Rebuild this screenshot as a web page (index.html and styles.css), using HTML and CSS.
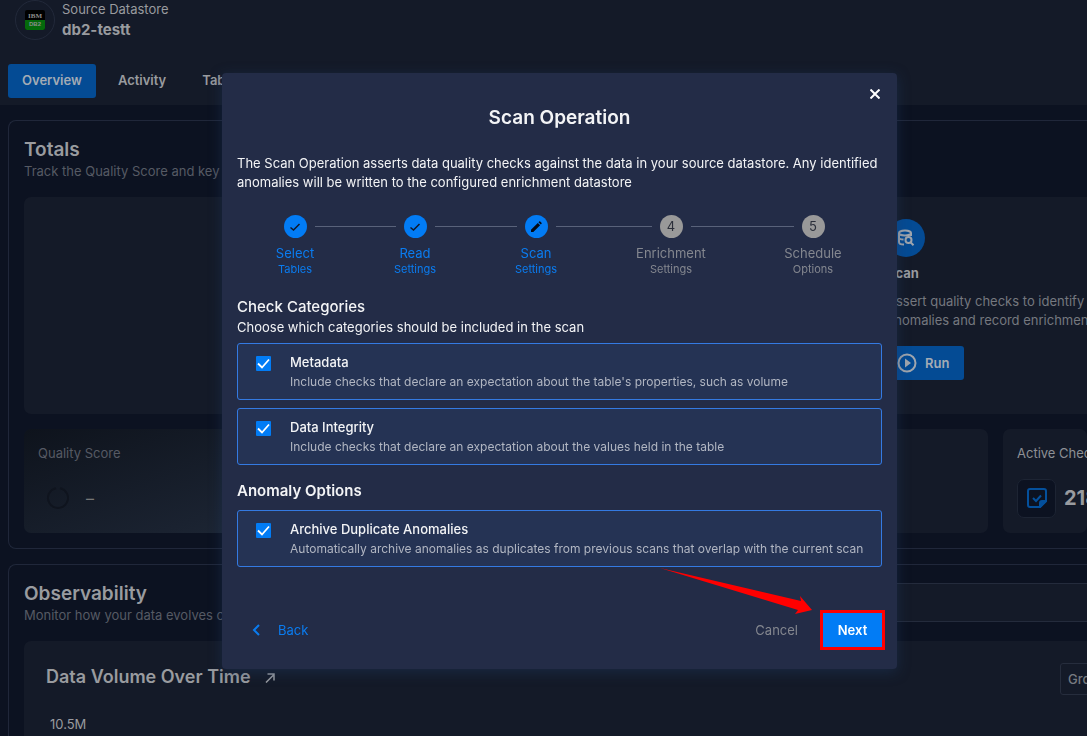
FILE: index.html
```html
<!DOCTYPE html>
<html lang="en">
<head>
<meta charset="utf-8">
<title>Scan Operation</title>
<link rel="stylesheet" href="styles.css">
</head>
<body>
<div class="page">
  <header class="header">
    <div class="source">
      <span class="source-logo">
        <svg width="20" height="20" viewBox="0 0 20 20" aria-hidden="true">
          <rect width="20" height="20" rx="2" fill="#000"/>
          <path d="M0 10h20v8a2 2 0 0 1-2 2H2a2 2 0 0 1-2-2z" fill="#046a0b"/>
          <text x="10" y="8" class="logo-ibm">IBM</text>
          <text x="10" y="16" class="logo-db">DB2</text>
        </svg>
      </span>
      <div>
        <p class="source-kind">Source Datastore</p>
        <p class="source-name">db2-testt</p>
      </div>
    </div>
    <nav class="tabs">
      <button class="tab tab-active">Overview</button>
      <button class="tab">Activity</button>
      <button class="tab">Tables</button>
    </nav>
  </header>
  <main class="main">
    <section class="card">
      <h2 class="card-title">Totals</h2>
      <p class="card-sub">Track the Quality Score and key metrics</p>
      <div class="panel operations">
        <article class="operation">
          <span class="operation-icon">
            <svg width="18" height="18" viewBox="0 0 18 18" fill="none" stroke="#a0a6ae" stroke-width="2" aria-hidden="true">
              <ellipse cx="8" cy="4" rx="6" ry="2.5"/>
              <path d="M2 4v9c0 1.500 2 2.500 5 2.500M14 4v3M2 8.500c0 1.200 2 2 4.500 2"/>
              <circle cx="11.500" cy="11" r="3"/>
              <path d="M13.500 13.300l3 3"/>
            </svg>
          </span>
          <h3 class="operation-title">Scan</h3>
          <p class="operation-text">Assert quality checks to identify anomalies and record enrichment</p>
          <button class="run">
            <svg width="20" height="20" viewBox="0 0 20 20" aria-hidden="true">
              <circle cx="10" cy="10" r="8.500" fill="none" stroke="#a0a6ae" stroke-width="2"/>
              <path d="M8 5.500l6 4.500-6 4.500z" fill="#a0a6ae"/>
            </svg>
            Run
          </button>
        </article>
      </div>
      <div class="metrics">
        <div class="panel metric metric-quality">
          <p class="metric-label">Quality Score</p>
          <div class="quality-value">
            <svg width="24" height="24" viewBox="0 0 24 24" aria-hidden="true">
              <path d="M14 2.200a10 10 0 1 1-4 0" fill="none" stroke="#0f141e" stroke-width="2"/>
            </svg>
            <span>–</span>
          </div>
        </div>
        <div class="panel metric"></div>
        <div class="panel metric">
          <p class="metric-label metric-label-light">Active Checks</p>
          <div class="checks-value">
            <span class="checks-icon">
              <svg width="20" height="20" viewBox="0 0 20 20" fill="none" stroke="#04509c" stroke-width="2" aria-hidden="true">
                <path d="M3 1h14a2 2 0 0 1 2 2v10l-6 6H3a2 2 0 0 1-2-2V3a2 2 0 0 1 2-2z"/>
                <path d="M19 13h-4a2 2 0 0 0-2 2v4z" fill="#04509c"/>
                <path d="M6 10l3 3 5-5.500"/>
              </svg>
            </span>
            <strong>218</strong>
          </div>
        </div>
      </div>
    </section>
    <section class="card card-observability">
      <div class="observability-head">
        <div>
          <h2 class="card-title">Observability</h2>
          <p class="card-sub">Monitor how your data evolves over time</p>
        </div>
        <div class="filter-bar"></div>
      </div>
      <div class="panel chart">
        <div class="chart-head">
          <h3 class="chart-title">Data Volume Over Time
            <svg width="10" height="10" viewBox="0 0 10 10" fill="none" stroke="#999ca1" stroke-width="1.500" aria-hidden="true">
              <path d="M1 9.500L9 1.500M2.500 1h6.500v6.500"/>
            </svg>
          </h3>
          <button class="group">Group</button>
        </div>
        <p class="chart-tick">10.5M</p>
      </div>
    </section>
  </main>
</div>

<div class="overlay">
  <form class="modal" role="dialog" aria-labelledby="modal-title">
    <button type="button" class="close" aria-label="Close">
      <svg width="10" height="10" viewBox="0 0 10 10" stroke="#fff" stroke-width="2" aria-hidden="true">
        <path d="M0.500 0.500l9 9M9.500 0.500l-9 9"/>
      </svg>
    </button>
    <h1 class="modal-title" id="modal-title">Scan Operation</h1>
    <p class="modal-text">The Scan Operation asserts data quality checks against the data in your source datastore. Any identified anomalies will be written to the configured enrichment datastore</p>
    <ol class="steps">
      <li class="step step-done">
        <div class="step-track"><span class="step-dot"><svg width="12" height="12" viewBox="0 0 12 12" fill="none" stroke="#10182a" stroke-width="1.500"><path d="M1.500 6.500L4.500 9 10.500 3"/></svg></span></div>
        <span class="step-name">Select</span><span class="step-sub">Tables</span>
      </li>
      <li class="step step-done">
        <div class="step-track"><span class="step-dot"><svg width="12" height="12" viewBox="0 0 12 12" fill="none" stroke="#10182a" stroke-width="1.500"><path d="M1.500 6.500L4.500 9 10.500 3"/></svg></span></div>
        <span class="step-name">Read</span><span class="step-sub">Settings</span>
      </li>
      <li class="step step-done">
        <div class="step-track"><span class="step-dot"><svg width="12" height="12" viewBox="0 0 12 12" fill="#050a14"><path d="M1 8.700L7.800 1.900l2.300 2.300L3.300 11H1zM8.500 1.200l.7-.7q.5-.5 1 0l1.300 1.300q.5.500 0 1l-.7.700z"/></svg></span></div>
        <span class="step-name">Scan</span><span class="step-sub">Settings</span>
      </li>
      <li class="step">
        <div class="step-track"><span class="step-dot">4</span></div>
        <span class="step-name">Enrichment</span><span class="step-sub">Settings</span>
      </li>
      <li class="step">
        <div class="step-track"><span class="step-dot">5</span></div>
        <span class="step-name">Schedule</span><span class="step-sub">Options</span>
      </li>
    </ol>
    <h2 class="group-title">Check Categories</h2>
    <p class="group-text">Choose which categories should be included in the scan</p>
    <label class="option">
      <input type="checkbox" class="check" checked>
      <span class="option-body">
        <span class="option-title">Metadata</span>
        <span class="option-text">Include checks that declare an expectation about the table's properties, such as volume</span>
      </span>
    </label>
    <label class="option">
      <input type="checkbox" class="check" checked>
      <span class="option-body">
        <span class="option-title">Data Integrity</span>
        <span class="option-text">Include checks that declare an expectation about the values held in the table</span>
      </span>
    </label>
    <h2 class="group-title group-title-strong">Anomaly Options</h2>
    <label class="option">
      <input type="checkbox" class="check" checked>
      <span class="option-body">
        <span class="option-title">Archive Duplicate Anomalies</span>
        <span class="option-text">Automatically archive anomalies as duplicates from previous scans that overlap with the current scan</span>
      </span>
    </label>
    <footer class="actions">
      <button type="button" class="back">
        <svg width="8" height="12" viewBox="0 0 8 12" fill="none" stroke="#0a7cf0" stroke-width="2" aria-hidden="true"><path d="M7 1L2 6l5 5"/></svg>
        Back
      </button>
      <button type="button" class="cancel">Cancel</button>
      <button type="submit" class="next">Next</button>
      <svg class="arrow" width="152" height="47" viewBox="0 0 152 47" aria-hidden="true">
        <path d="M0 0L141 33 140 28 152 42 135 46 138 42z" fill="#f00"/>
      </svg>
    </footer>
  </form>
</div>
</body>
</html>
```

FILE: styles.css
```css
* { box-sizing: border-box; }
body, h1, h2, h3, p, ol { margin: 0; padding: 0; }
body {
  background: #0c1221;
  color: #999b9f;
  font-family: Inter, "Liberation Sans", sans-serif;
  font-size: 13px;
  line-height: 19px;
  overflow: hidden;
}
button { border: 0; background: none; color: inherit; font: inherit; padding: 0; }

.page { display: flex; flex-direction: column; height: 100vh; min-width: 900px; }
.header { background: #141a28; padding: 0 0 7px 8px; }
.source { display: flex; gap: 7px; padding-left: 7px; height: 64px; }
.source-logo {
  display: flex; align-items: center; justify-content: center;
  width: 40px; height: 40px; border: 1px solid #22293a; border-radius: 50%;
}
.logo-ibm, .logo-db { font: 700 7px "Liberation Serif", serif; text-anchor: middle; fill: #8d8d8d; }
.logo-db { font: 700 6px "Liberation Sans", sans-serif; }
.source-kind { line-height: 19px; }
.source-name { font-size: 15px; font-weight: 700; line-height: 22px; }
.tabs { display: flex; gap: 8px; }
.tab { height: 34px; padding: 0 14px 2px; border-radius: 3px; font-weight: 600; }
.tab-active { background: #044b94; color: #a3abb5; }

.main { display: flex; flex-direction: column; gap: 15px; flex: 1; min-height: 0; padding: 15px 0 0 8px; }
.card {
  display: flex; flex-direction: column;
  padding: 17px 0 15px 15px;
  border: 1px solid #20273a; border-right: 0; border-radius: 8px 0 0 8px;
}
.card-title { font-size: 19px; font-weight: 600; line-height: 24px; }
.card-sub { color: #565a64; line-height: 19px; }
.panel { background: #141a28; border-radius: 7px; }
.operations {
  display: flex; justify-content: flex-end; overflow: hidden;
  height: 217px; margin: 16px 0 15px; padding-top: 22px; border-radius: 7px 0 0 7px;
}
.operation { display: flex; flex-direction: column; align-items: flex-start; width: 200px; flex: none; }
.operation-icon {
  display: flex; align-items: center; justify-content: center;
  width: 38px; height: 38px; border-radius: 50%; background: #044b94;
}
.operation-title { margin: 7px 0 9px; font-size: 13px; font-weight: 700; line-height: 19px; }
.operation-text { width: 220px; color: #75787f; }
.run {
  display: flex; align-items: center; gap: 8px;
  height: 34px; margin-top: 16px; padding: 0 15px 0 10px;
  border-radius: 3px; background: #044b94; color: #a3abb5; font-weight: 600;
}
.metrics { display: grid; grid-template-columns: 1fr 1fr 84px; gap: 15px; }
.metric { height: 104px; padding: 15px 0 0 14px; overflow: hidden; }
.metric-quality { background: linear-gradient(160deg, #0e131c, #1a2230 55%, #25303f); }
.metric-label { color: #565a64; white-space: nowrap; }
.metric-label-light { color: #8d9095; }
.quality-value { display: flex; align-items: center; gap: 16px; height: 40px; margin-top: 15px; padding-left: 8px; color: #777; font-size: 16px; }
.checks-value { display: flex; align-items: center; gap: 8px; height: 40px; margin-top: 15px; font-size: 20px; }
.checks-icon {
  display: flex; align-items: center; justify-content: center; flex: none;
  width: 39px; height: 39px; border: 1px solid #1d2433; border-radius: 7px; background: #0c1221;
}

.card-observability { flex: 1; min-height: 0; padding-bottom: 0; border-bottom: 0; border-radius: 8px 0 0; }
.observability-head { display: flex; }
.filter-bar { flex: 1; height: 39px; margin: 1px 0 0 48px; border: solid #242b3c; border-width: 1px 0; background: #141a28; }
.chart { flex: 1; margin-top: 16px; padding: 22px 0 0 22px; border-radius: 7px 0 0; overflow: hidden; }
.chart-head { display: flex; justify-content: space-between; align-items: flex-start; }
.chart-title { font-size: 18px; font-weight: 600; line-height: 28px; }
.chart-title svg { margin-left: 10px; }
.group { width: 60px; height: 32px; margin-right: -33px; padding-left: 7px; border: 1px solid #262d3d; border-radius: 3px; color: #777a80; text-align: left; font-weight: 500; }
.chart-tick { margin-top: 20px; padding-left: 4px; }

.overlay {
  position: fixed; inset: 0;
  display: flex; align-items: center; justify-content: center;
  padding: 6px 0 0 32px;
}
.modal {
  position: relative;
  display: flex; flex-direction: column;
  width: 675px; max-width: 100%;
  padding: 31px 15px 22px;
  border-radius: 4px;
  background: #232c47;
  color: #f3f4f6;
  box-shadow: 0 3px 14px rgba(32, 60, 100, 0.45);
}
.close { position: absolute; top: 11px; right: 12px; display: flex; align-items: center; justify-content: center; width: 20px; height: 20px; }
.modal-title { font-size: 19px; font-weight: 600; line-height: 28px; text-align: center; }
.modal-text { margin: 22px 0 23px; }
.steps { display: grid; grid-template-columns: 116fr 124fr 118fr 152fr 132fr; padding-right: 3px; list-style: none; }
.step { display: flex; flex-direction: column; text-align: center; color: #84878f; }
.step-done { color: #0a7cf0; }
.step-track { display: flex; align-items: center; gap: 8px; height: 23px; margin-bottom: 6px; }
.step-track::before, .step-track::after { content: ""; flex: 1; height: 1px; background: #59627a; }
.step:first-child .step-track::before, .step:last-child .step-track::after { visibility: hidden; }
.step-dot {
  display: flex; align-items: center; justify-content: center;
  width: 23px; height: 23px; border-radius: 50%;
  background: #999; color: #2b2f3a;
}
.step-done .step-dot { background: #027cf5; }
.step-name { line-height: 18px; }
.step-sub { font-size: 11px; line-height: 14px; }
.group-title { margin-top: 20px; font-size: 15px; font-weight: 500; line-height: 22px; }
.group-title-strong { margin-top: 15px; margin-bottom: 8px; font-weight: 600; }
.group-text { margin-bottom: 6px; }
.option {
  display: flex; gap: 19px;
  min-height: 57px; padding: 9px 8px 8px 18px;
  border: 1px solid #347ae2; border-radius: 3px;
  background: #253354;
}
.option + .option { margin-top: 8px; }
.check {
  appearance: none;
  width: 15px; height: 15px; margin: 3px 0 0; flex: none;
  border-radius: 1px;
  background: #027cf5 url("data:image/svg+xml,%3Csvg xmlns='http://www.w3.org/2000/svg' viewBox='0 0 15 15'%3E%3Cpath d='M2 7.500l4 4 7-8' fill='none' stroke='white' stroke-width='1.800'/%3E%3C/svg%3E");
}
.option-body { display: flex; flex-direction: column; }
.option-title { font-weight: 500; line-height: 19px; }
.option-text { color: #b1b6c2; font-size: 12px; line-height: 19px; }
.actions { position: relative; display: flex; align-items: center; margin-top: 46px; }
.back { display: flex; align-items: center; gap: 18px; margin-right: auto; padding-left: 15px; color: #0a7cf0; }
.cancel { margin-right: 25px; color: #84878f; }
.next { width: 59px; height: 34px; outline: 3px solid #f00; background: #027cf5; color: #fff; font-weight: 600; }
.arrow { position: absolute; right: 70px; bottom: 32px; }
```
